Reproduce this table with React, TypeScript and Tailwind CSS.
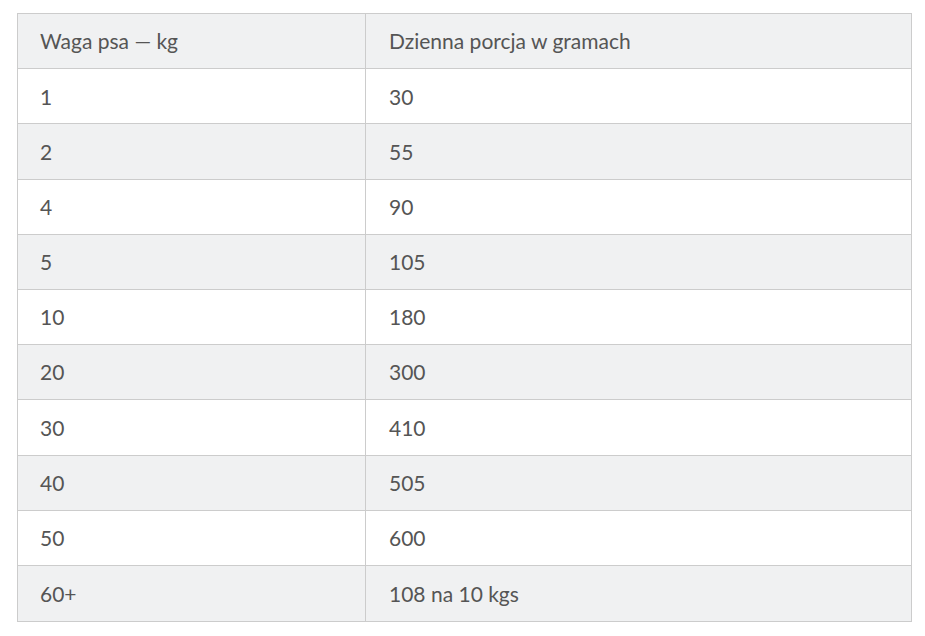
import React from "react";

const rows: [string, string][] = [
  ["Waga psa — kg", "Dzienna porcja w gramach"],
  ["1", "30"],
  ["2", "55"],
  ["4", "90"],
  ["5", "105"],
  ["10", "180"],
  ["20", "300"],
  ["30", "410"],
  ["40", "505"],
  ["50", "600"],
  ["60+", "108 na 10 kgs"],
];

export default function App() {
  return (
    <div className="w-[925px] h-[636px] bg-white pt-[13px] pl-[17px]" style={{ fontFamily: "Lato, 'Liberation Sans', sans-serif" }}>
      <div className="w-[895px] border border-[#cccccc] text-[21px] text-[#555555]">
        {rows.map(([a, b], i) => (
          <div
            key={i}
            className={`grid grid-cols-[348px_1fr] h-[55.2px] ${i < rows.length - 1 ? "border-b border-[#cccccc]" : ""} ${i % 2 === 0 ? "bg-[#f0f1f2]" : "bg-white"}`}
          >
            <div className="flex items-center pl-[22px] border-r border-[#cccccc]">{a}</div>
            <div className="flex items-center pl-[23px]">{b}</div>
          </div>
        ))}
      </div>
    </div>
  );
}
